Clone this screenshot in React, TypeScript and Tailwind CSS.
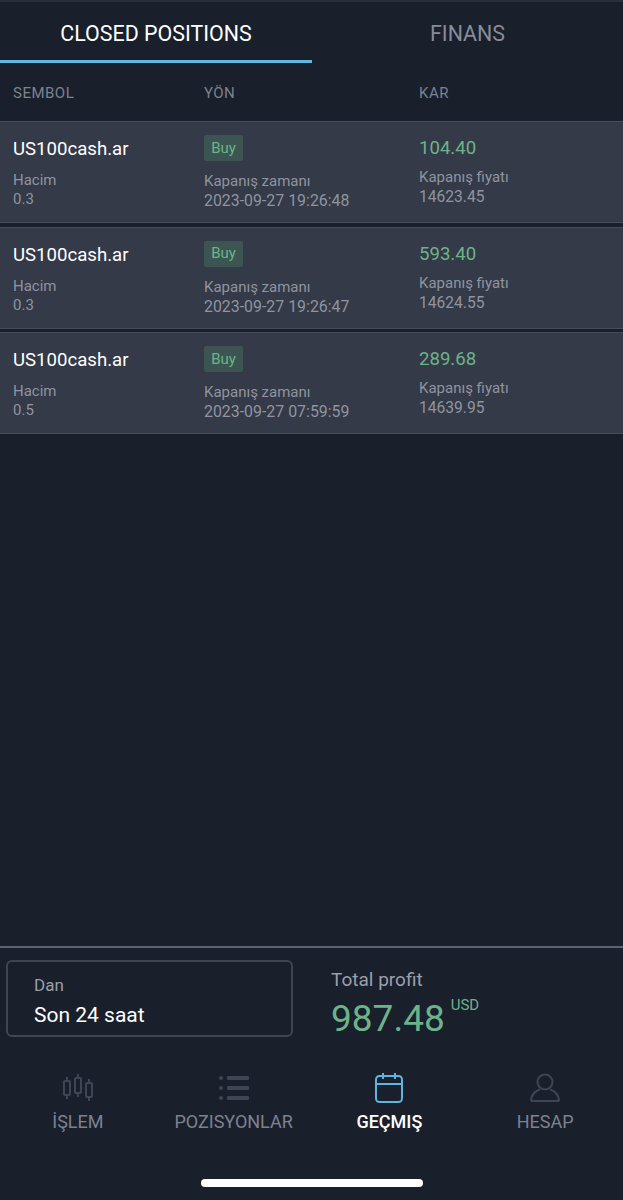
const rows = [
  { volume: "0.3", time: "2023-09-27 19:26:48", profit: "104.40", price: "14623.45" },
  { volume: "0.3", time: "2023-09-27 19:26:47", profit: "593.40", price: "14624.55" },
  { volume: "0.5", time: "2023-09-27 07:59:59", profit: "289.68", price: "14639.95" },
];

function CandleIcon() {
  return (
    <svg width="32" height="28" viewBox="0 0 32 28" fill="none" stroke="#3f4552" strokeWidth="2">
      <rect x="2" y="7" width="6" height="14" rx="1" />
      <path d="M5 3v4M5 21v4" />
      <rect x="13" y="4" width="6" height="15" rx="1" />
      <path d="M16 0v4M16 19v4" />
      <rect x="24" y="9" width="6" height="14" rx="1" />
      <path d="M27 5v4M27 23v4" />
    </svg>
  );
}

function ListIcon() {
  return (
    <svg width="30" height="26" viewBox="0 0 30 26" fill="#3f4552">
      <circle cx="2" cy="3" r="2" />
      <circle cx="2" cy="13" r="2" />
      <circle cx="2" cy="23" r="2" />
      <rect x="8" y="1" width="22" height="4" rx="1" />
      <rect x="8" y="11" width="22" height="4" rx="1" />
      <rect x="8" y="21" width="22" height="4" rx="1" />
    </svg>
  );
}

function CalendarIcon() {
  return (
    <svg width="28" height="30" viewBox="0 0 28 30" fill="none" stroke="#5fb4e0" strokeWidth="2">
      <rect x="1" y="3" width="26" height="26" rx="3.5" />
      <path d="M1 11h26M8 0v6M20 0v6" />
    </svg>
  );
}

function PersonIcon() {
  return (
    <svg width="30" height="30" viewBox="0 0 30 30" fill="none" stroke="#3f4552" strokeWidth="2">
      <circle cx="15" cy="9" r="7.5" />
      <path d="M1 28c0-7 6-11 9-11.500M29 28c0-7-6-11-9-11.500M1 28h28" />
    </svg>
  );
}

const navItems = [
  { label: "İŞLEM", icon: <CandleIcon />, active: false },
  { label: "POZISYONLAR", icon: <ListIcon />, active: false },
  { label: "GEÇMIŞ", icon: <CalendarIcon />, active: true },
  { label: "HESAP", icon: <PersonIcon />, active: false },
];

export default function App() {
  return (
    <div className="flex h-[1200px] w-[623px] flex-col overflow-hidden bg-[#1a1f2c] font-['Roboto',sans-serif]">
      {/* Tabs */}
      <div className="flex h-[63px] border-t-2 border-[#2a2f3b]">
        <div className="flex w-[312px] items-center justify-center border-b-[3px] border-[#62b8e2] pt-[6px] text-[21.4px] text-white">
          CLOSED POSITIONS
        </div>
        <div className="flex flex-1 items-center justify-center pt-[3px] text-[21.4px] text-[#868c99]">FINANS</div>
      </div>

      {/* Table head */}
      <div className="flex h-[58px] items-center pt-[3px] text-[15px] tracking-[0.5px] text-[#7d828e]">
        <div className="w-[204px] pl-[13px]">SEMBOL</div>
        <div className="w-[215px]">YÖN</div>
        <div>KAR</div>
      </div>

      {/* Rows */}
      <div className="flex flex-col gap-[3.5px]">
        {rows.map((row) => (
          <div key={row.time} className="flex h-[102px] border-y border-[#464c59] bg-[#343a47]">
            <div className="w-[204px] pl-[13px] pt-[14px]">
              <div className="text-[18.6px] leading-[26px] text-white">US100cash.ar</div>
              <div className="mt-[9px] text-[15px] leading-[19px] text-[#8f94a0]">Hacim</div>
              <div className="text-[15px] leading-[19px] text-[#8f94a0]">{row.volume}</div>
            </div>
            <div className="w-[215px] pt-[13px]">
              <div className="flex h-[26px] w-[39px] items-center justify-center rounded-[2px] bg-[#3d5552] text-[15px] text-[#6cb38a]">
                Buy
              </div>
              <div className="mt-[11px] text-[15px] leading-[19px] text-[#8f94a0]">Kapanış zamanı</div>
              <div className="text-[15.9px] leading-[19px] text-[#8f94a0]">{row.time}</div>
            </div>
            <div className="pt-[13px]">
              <div className="text-[18.6px] leading-[26px] text-[#6cb38a]">{row.profit}</div>
              <div className="mt-[6px] text-[15px] leading-[20px] text-[#8f94a0]">Kapanış fiyatı</div>
              <div className="text-[15.6px] leading-[20px] text-[#8f94a0]">{row.price}</div>
            </div>
          </div>
        ))}
      </div>

      <div className="flex-1" />

      {/* Filter and total */}
      <div className="flex h-[110px] border-t-2 border-[#5c6272] pl-[6px] pt-[12px]">
        <div className="h-[77px] w-[287px] rounded-[6px] border-2 border-[#3f4552] pl-[26px] pt-[12px]">
          <div className="text-[17px] leading-[22px] text-[#9a9fab]">Dan</div>
          <div className="mt-[6px] text-[21px] leading-[26px] text-white">Son 24 saat</div>
        </div>
        <div className="pl-[38px] pt-[8px]">
          <div className="text-[19px] leading-[24px] text-[#9a9fab]">Total profit</div>
          <div className="mt-[3px] flex">
            <span className="text-[37px] leading-[48px] text-[#6cb38a]">987.48</span>
            <span className="ml-[6px] text-[15px] leading-[20px] text-[#6cb38a]">USD</span>
          </div>
        </div>
      </div>

      {/* Bottom nav */}
      <div className="flex h-[94px] pt-[16px]">
        {navItems.map((item) => (
          <div key={item.label} className="flex w-[156px] flex-col items-center">
            <div className="flex h-[32px] items-center justify-center">{item.icon}</div>
            <div
              className={`mt-[6px] text-[18px] leading-[24px] ${item.active ? "font-medium text-white" : "text-[#7d828e]"}`}
            >
              {item.label}
            </div>
          </div>
        ))}
      </div>

      {/* Home indicator */}
      <div className="flex h-[50px] justify-center pt-[29px]">
        <div className="h-[8px] w-[222px] rounded-full bg-white" />
      </div>
    </div>
  );
}
